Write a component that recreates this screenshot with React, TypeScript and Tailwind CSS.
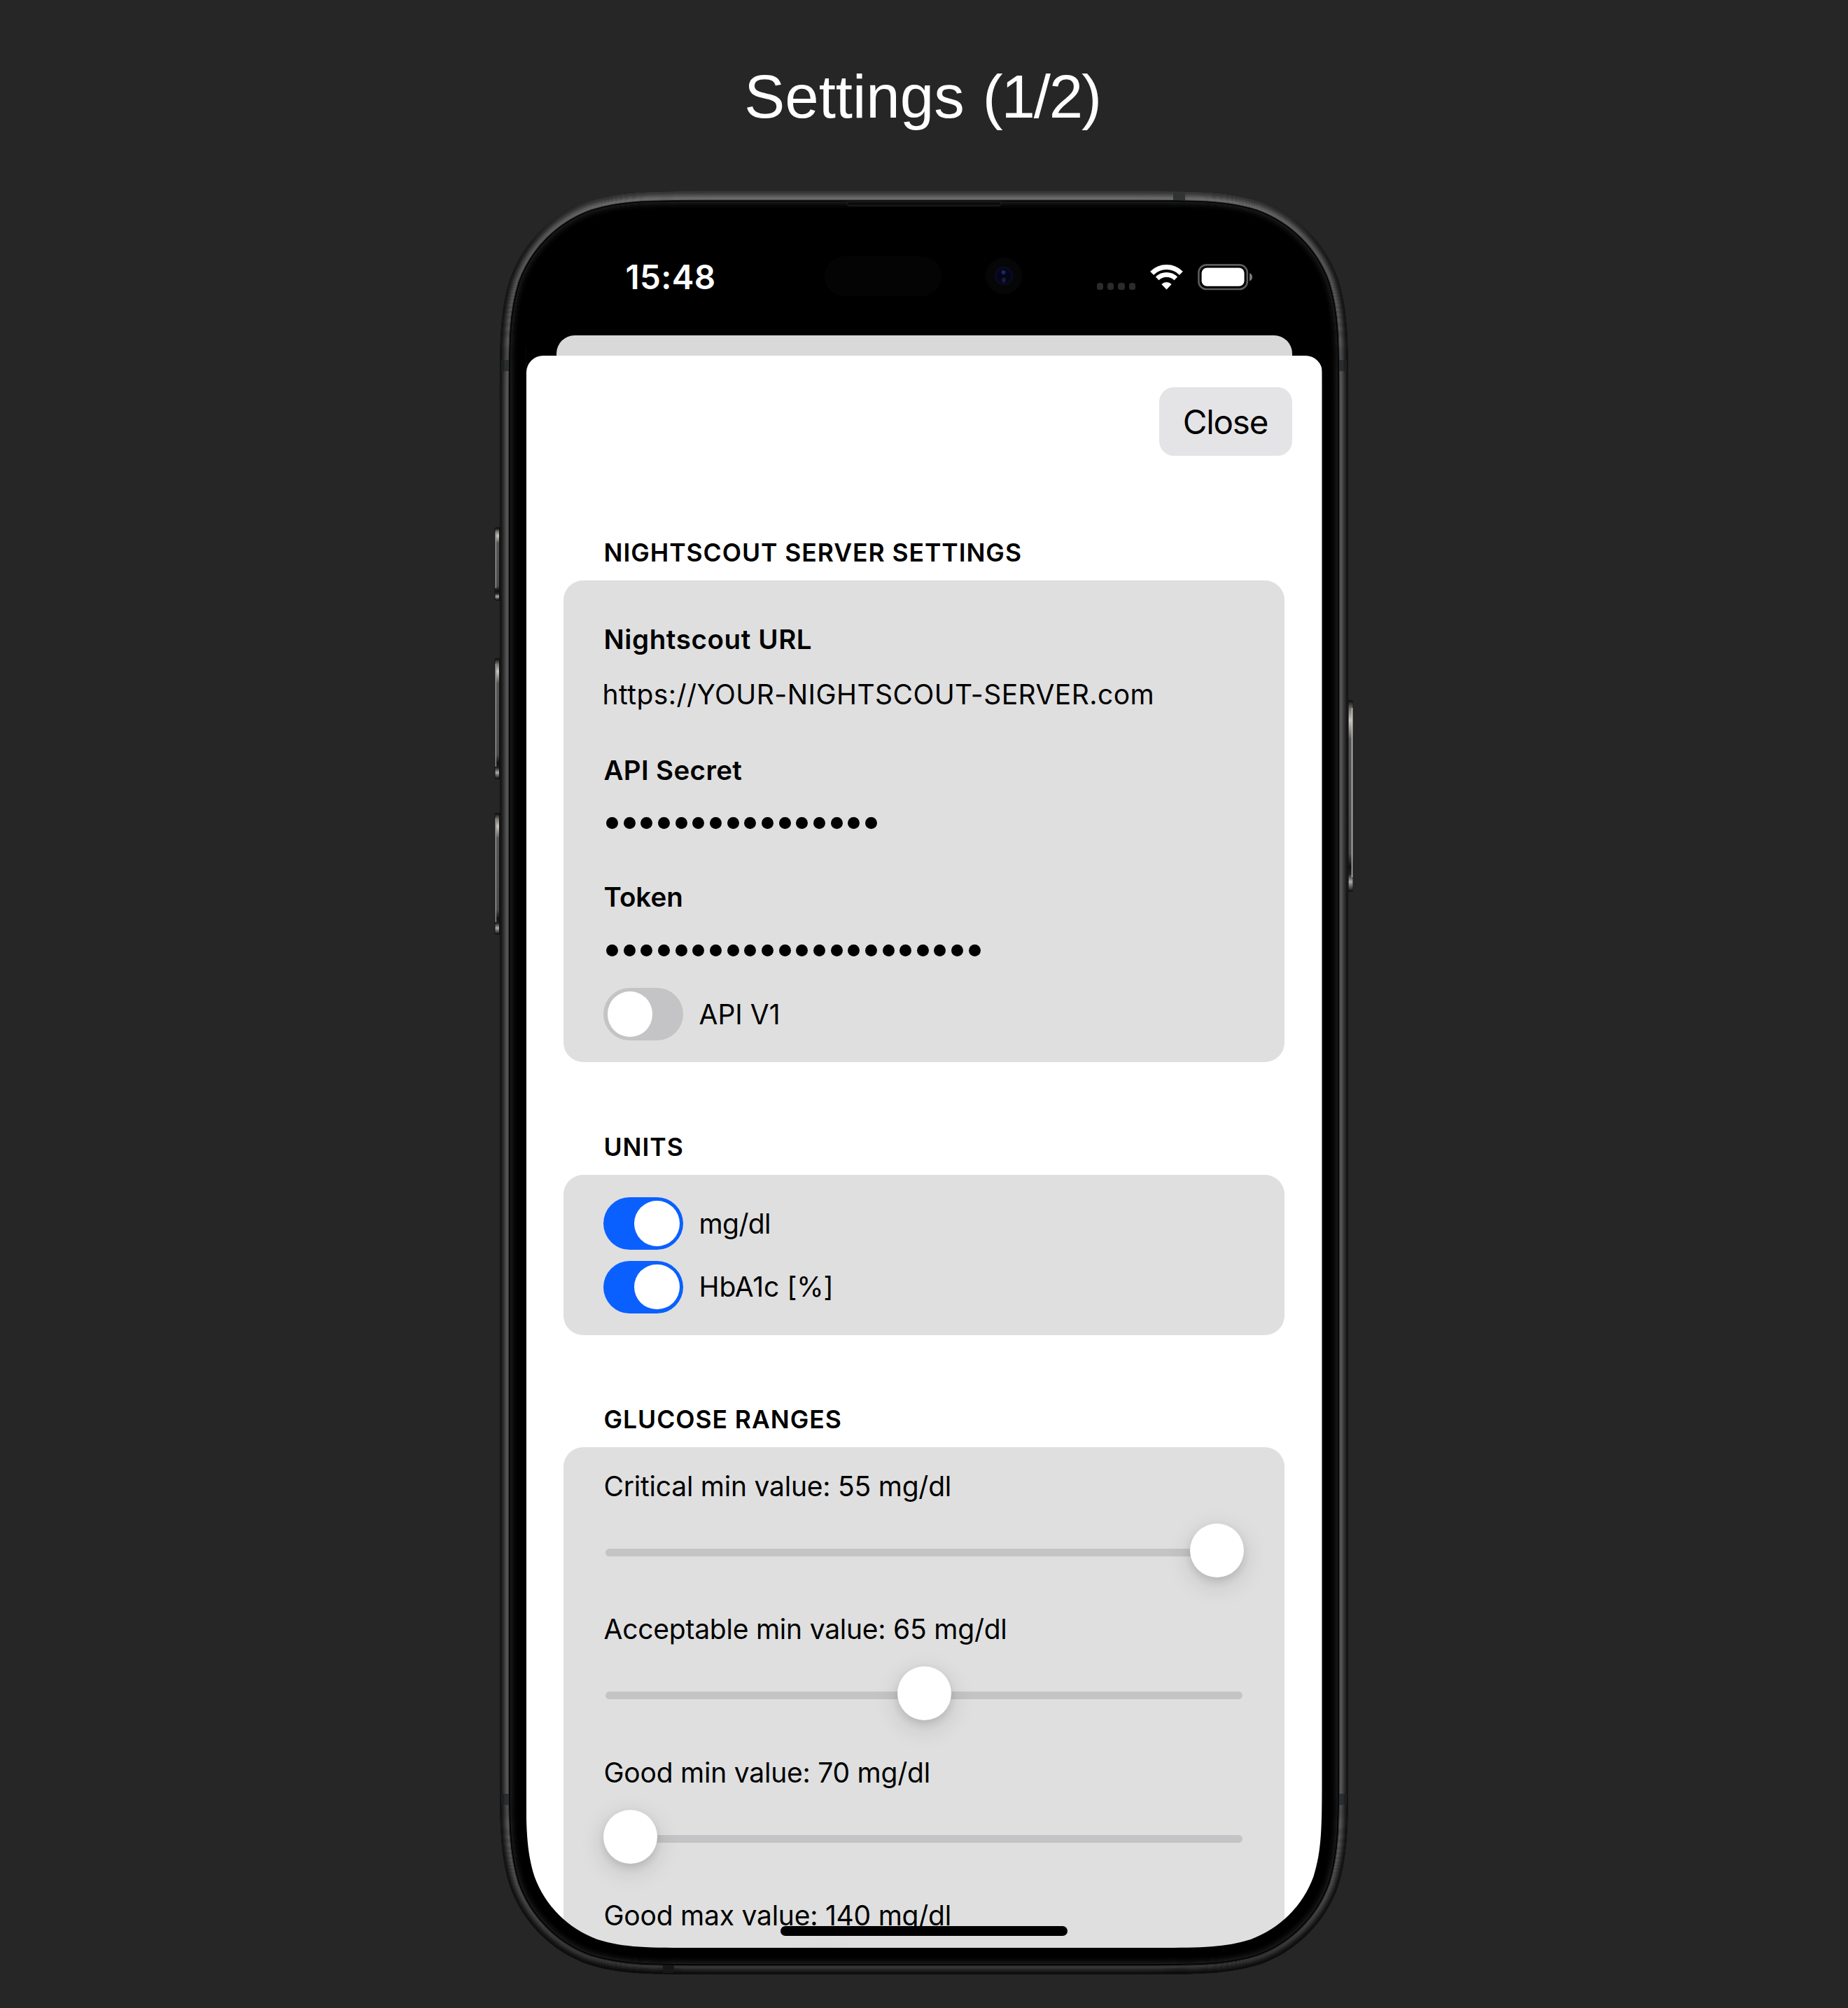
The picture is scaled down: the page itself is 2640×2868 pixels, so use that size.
import React from "react";

/* Rounded rectangle with continuous-curvature corners. */
function squircle(x: number, y: number, w: number, h: number, r: number): string {
  const A = 1.52866, B = 1.08849, C = 0.86841, D = 0.63149, E = 0.07491, F = 0.37282, G = 0.16906;
  const X = (u: number, right: boolean) => (right ? x + w - u * r : x + u * r).toFixed(2);
  const Y = (v: number, bottom: boolean) => (bottom ? y + h - v * r : y + v * r).toFixed(2);
  const P = (u: number, v: number, right: boolean, bottom: boolean) => `${X(u, right)} ${Y(v, bottom)}`;
  return [
    `M${P(A, 0, false, false)}L${P(A, 0, true, false)}`,
    `C${P(B, 0, true, false)} ${P(C, 0, true, false)} ${P(D, E, true, false)}`,
    `C${P(F, G, true, false)} ${P(G, F, true, false)} ${P(E, D, true, false)}`,
    `C${P(0, C, true, false)} ${P(0, B, true, false)} ${P(0, A, true, false)}`,
    `L${P(0, A, true, true)}`,
    `C${P(0, B, true, true)} ${P(0, C, true, true)} ${P(E, D, true, true)}`,
    `C${P(G, F, true, true)} ${P(F, G, true, true)} ${P(D, E, true, true)}`,
    `C${P(C, 0, true, true)} ${P(B, 0, true, true)} ${P(A, 0, true, true)}`,
    `L${P(A, 0, false, true)}`,
    `C${P(B, 0, false, true)} ${P(C, 0, false, true)} ${P(D, E, false, true)}`,
    `C${P(F, G, false, true)} ${P(G, F, false, true)} ${P(E, D, false, true)}`,
    `C${P(0, C, false, true)} ${P(0, B, false, true)} ${P(0, A, false, true)}`,
    `L${P(0, A, false, false)}`,
    `C${P(0, B, false, false)} ${P(0, C, false, false)} ${P(E, D, false, false)}`,
    `C${P(G, F, false, false)} ${P(F, G, false, false)} ${P(D, E, false, false)}`,
    `C${P(C, 0, false, false)} ${P(B, 0, false, false)} ${P(A, 0, false, false)}Z`,
  ].join("");
}

const W = 1212;
const H = 2547;
const ring = (inset: number) => squircle(inset, inset, W - 2 * inset, H - 2 * inset, 198 - inset);
const SCREEN = squircle(37.5, 37, 1137, 2472, 161);

/* Metal band: one closed outline per pixel step, dark at the edge and bright toward the glass. */
const BAND: [number, string][] = [
  [0.5, "#161616"], [1.5, "#161616"], [2.5, "#1a1a1a"], [3.5, "#202020"], [4.5, "#282828"],
  [5.5, "#303030"], [6.5, "#383838"], [7.5, "#404040"], [8.5, "#484848"], [9.5, "#505050"],
  [10.5, "#555555"], [11.5, "#585858"], [12.5, "#3c3c3c"], [13.5, "#0c0c0c"], [14.5, "#020202"],
  [15.5, "#1c1c1c"], [16.5, "#161616"], [17.5, "#121212"], [18.5, "#0f0f0f"], [19.5, "#0c0c0c"],
  [20.5, "#090909"], [21.5, "#070707"], [22.5, "#050505"], [23.5, "#030303"],
];

function PhoneFrame() {
  return (
    <svg className="pointer-events-none absolute -left-2 top-0" width={W + 16} height={H} viewBox={`-8 0 ${W + 16} ${H}`}>
      <defs>
        <linearGradient id="shade" x1="0" y1="0" x2="0" y2="1">
          <stop offset="0" stopColor="#fff" stopOpacity="0.14" />
          <stop offset="0.03" stopColor="#fff" stopOpacity="0.03" />
          <stop offset="0.1" stopColor="#000" stopOpacity="0" />
          <stop offset="0.93" stopColor="#000" stopOpacity="0" />
          <stop offset="1" stopColor="#000" stopOpacity="0.4" />
        </linearGradient>
        <linearGradient id="key" x1="0" y1="0" x2="0" y2="1">
          <stop offset="0" stopColor="#1a1a1a" />
          <stop offset="0.04" stopColor="#77736f" />
          <stop offset="0.1" stopColor="#c8c4bf" />
          <stop offset="0.2" stopColor="#555" />
          <stop offset="0.8" stopColor="#4a4a4a" />
          <stop offset="0.87" stopColor="#111" />
          <stop offset="0.91" stopColor="#222" />
          <stop offset="0.95" stopColor="#aaa" />
          <stop offset="1" stopColor="#111" />
        </linearGradient>
      </defs>
      {[[480, 105], [667, 173], [888, 174]].map(([y, h]) => (
        <g key={y}>
          <rect x="-7.5" y={y} width="9" height={h} rx="3" fill="#141414" />
          <rect x="-6.5" y={y + 2} width="6.5" height={h - 3} rx="2" fill="url(#key)" />
          <rect x="-6.5" y={y + 8} width="1.6" height={h - 26} fill="#8f8d8a" />
          <rect x="-1" y={y} width="1.5" height={h} fill="#0c0c0c" />
        </g>
      ))}
      <rect x="1211" y="727" width="8" height="274" rx="3" fill="#141414" />
      <rect x="1212.5" y="729" width="6" height="271" rx="2" fill="url(#key)" />
      <rect x="1216.8" y="738" width="1.5" height="242" fill="#c4c1bc" />

      <path fillRule="evenodd" fill="#000" d={ring(0) + SCREEN} />
      {BAND.map(([inset, color]) => (
        <path key={inset} d={ring(inset)} fill="none" stroke={color} strokeWidth="1.3" />
      ))}
      <path fillRule="evenodd" fill="url(#shade)" d={ring(0) + ring(13)} />

      <rect x="962" y="2" width="17" height="11" fill="#303234" />
      <rect x="233" y="2534" width="16" height="11" fill="#161717" />
      {[241, 2289].map((y) => (
        <g key={y}>
          <rect x="2" y={y} width="11" height="16" fill="#1e2021" />
          <rect x="6.5" y={y} width="6.5" height="16" fill="#2b2e30" />
          <rect x="1199" y={y} width="11" height="16" fill="#1e2021" />
          <rect x="1199" y={y} width="6.5" height="16" fill="#2b2e30" />
        </g>
      ))}
      <path d="M495 15 q1 6 4 6 h214 q3 0 4 -6 z" fill="#0c0c0c" stroke="#262626" strokeWidth="1" />
    </svg>
  );
}

function StatusBar() {
  return (
    <div className="h-[193px] w-full pt-[80px] text-white">
      <div className="flex h-[60px] items-center">
        <div className="ml-[142px] w-[284px] text-[47.5px] leading-[60px] font-semibold tracking-[0.4px]">15:48</div>
        <div className="-mt-[4px] h-[57px] w-[167px] rounded-full bg-[#040404]" />
        <svg className="-mt-[4px] ml-[63px]" width="52" height="52" viewBox="0 0 52 52">
          <circle cx="26" cy="26" r="26" fill="#070607" />
          <circle cx="26" cy="26" r="13.5" fill="#090a1c" />
          <circle cx="26" cy="26" r="10" fill="#04051a" />
          <circle cx="25.5" cy="21" r="3" fill="#20245c" />
          <circle cx="26" cy="31.5" r="3" fill="#0b2434" />
          <circle cx="26" cy="34" r="1.8" fill="#3a1048" />
        </svg>
        <div className="mt-[25px] ml-[107px] flex gap-[6px]">
          {[0, 1, 2, 3].map((i) => (
            <i key={i} className="h-[10px] w-[9.4px] rounded-[3.5px] bg-[#2b2b2b]" />
          ))}
        </div>
        <svg className="ml-[20px]" width="49" height="36" viewBox="0 0 49 36" fill="none">
          <path d="M3.6 12.2 A29.5 29.5 0 0 1 45.4 12.2" stroke="#fff" strokeWidth="7" />
          <path d="M11.2 19.9 A18.8 18.8 0 0 1 37.8 19.9" stroke="#fff" strokeWidth="6.6" />
          <path d="M24.5 35.5 L17.3 28 Q20.3 25 24.5 25 T31.7 28 Z" fill="#fff" />
        </svg>
        <svg className="ml-[20px]" width="80" height="38" viewBox="0 0 80 38">
          <rect x="1.4" y="1.4" width="69.4" height="34.6" rx="11" fill="none" stroke="#5c5c5c" strokeWidth="2.6" />
          <rect x="5.6" y="5.6" width="61" height="26.2" rx="7.5" fill="#fff" />
          <path d="M74 13 Q78 14.5 78 18.7 T74 24.4 Z" fill="#7a7a7a" />
        </svg>
      </div>
    </div>
  );
}

function SectionTitle({ children }: { children: React.ReactNode }) {
  return <h2 className="pl-[57.5px] text-[35.5px] leading-[44px] font-semibold tracking-[0.95px] text-black">{children}</h2>;
}

function Card({ className = "", children }: { className?: string; children: React.ReactNode }) {
  return <section className={`w-[1030px] rounded-[28px] bg-[#dfdfdf] pl-[57px] ${className}`}>{children}</section>;
}

function FieldLabel({ className = "", children }: { className?: string; children: React.ReactNode }) {
  return <div className={`pl-[0.5px] text-[38.5px] leading-[48px] font-semibold ${className}`}>{children}</div>;
}

function Secret({ count, className }: { count: number; className: string }) {
  return (
    <div className={`flex gap-[7.66px] pl-[4px] ${className}`}>
      {Array.from({ length: count }, (_, i) => (
        <i key={i} className="size-[17px] rounded-full bg-black" />
      ))}
    </div>
  );
}

function Toggle({ on = false, label, className = "", text = "tracking-normal" }: { on?: boolean; label: string; className?: string; text?: string }) {
  return (
    <div className={`flex h-[75px] items-center ${className}`}>
      <div className={`flex h-[75px] w-[114px] items-center rounded-full px-[5.5px] ${on ? "justify-end bg-[#0a60ff]" : "bg-[#c4c4c6]"}`}>
        <div className="size-[64.5px] rounded-full bg-white" />
      </div>
      <span className={`ml-[22.5px] text-[39px] leading-[48px] ${text}`}>{label}</span>
    </div>
  );
}

function Range({ label, offset }: { label: string; offset: string }) {
  return (
    <div className="h-[204.3px]">
      <div className="pl-[0.5px] text-[39px] leading-[48px] tracking-[-0.23px] whitespace-nowrap">{label}</div>
      <div className="mt-[28.5px] flex h-[78px] w-[914px] items-center">
        <div className="mt-[6px] ml-[3px] h-[11px] w-[910px] rounded-full bg-[#c4c4c6]" />
        <div className={`-ml-[913px] size-[77px] shrink-0 rounded-full bg-white shadow-[0_10px_36px_rgba(0,0,0,0.14),0_5px_12px_rgba(0,0,0,0.1)] ${offset}`} />
      </div>
    </div>
  );
}

export default function App() {
  return (
    <div className="flex h-[2868px] w-[2640px] flex-col items-center overflow-hidden bg-[#262626] font-['Inter',sans-serif] text-black">
      <h1 className="h-[273px] pt-[88px] pr-[5px] font-['Liberation_Sans',sans-serif] text-[87px] leading-[100px] text-white">
        Settings <span className="ml-[2px] tracking-[-2.2px]">(1/2)</span>
      </h1>
      <main className="relative h-[2547px] w-[1212px] pt-[13px] pr-[37.5px] pl-[37.5px]">
        <div className="h-[2496px] w-[1137px] overflow-hidden rounded-t-[185px] rounded-b-[155px] bg-black">
          <StatusBar />
          <div className="mx-auto h-[29px] w-[1051px] rounded-t-[26px] bg-[#d9d9d9]" />
          <div className="flex h-[2280px] w-full flex-col items-center rounded-t-[24px] bg-white">
            <div className="flex h-[241px] w-full shrink-0 justify-end pt-[45px] pr-[43px]">
              <button className="h-[98px] w-[190px] rounded-[21px] bg-[#e4e4e6] pt-[2px] text-[47.5px] tracking-[-1.2px]">Close</button>
            </div>
            <div className="w-[1030px]">
              <div className="h-[80px] pt-[19px]"><SectionTitle>NIGHTSCOUT SERVER SETTINGS</SectionTitle></div>
              <Card className="h-[688px] pt-[60px]">
                <FieldLabel className="tracking-[0.6px]">Nightscout URL</FieldLabel>
                <div className="mt-[31px] -ml-[1.5px] text-[39px] leading-[48px] tracking-[0.44px] whitespace-nowrap">https://YOUR-NIGHTSCOUT-SERVER.com</div>
                <FieldLabel className="mt-[59.5px] tracking-[0.35px]">API Secret</FieldLabel>
                <Secret count={16} className="mt-[43.5px]" />
                <FieldLabel className="mt-[73px]">Token</FieldLabel>
                <Secret count={22} className="mt-[44px]" />
                <Toggle label="API V1" className="mt-[45px]" />
              </Card>
              <div className="h-[161px] pt-[100px]"><SectionTitle>UNITS</SectionTitle></div>
              <Card className="h-[229px] pt-[32px]">
                <Toggle on label="mg/dl" text="tracking-[-0.6px]" />
                <Toggle on label="HbA1c [%]" className="mt-[15.5px]" text="tracking-[-0.1px]" />
              </Card>
              <div className="h-[160px] pt-[99px]"><SectionTitle>GLUCOSE RANGES</SectionTitle></div>
              <Card className="h-[760px] pt-[32px]">
                <Range label="Critical min value: 55 mg/dl" offset="translate-x-[838px]" />
                <Range label="Acceptable min value: 65 mg/dl" offset="translate-x-[420px]" />
                <Range label="Good min value: 70 mg/dl" offset="translate-x-0" />
                <Range label="Good max value: 140 mg/dl" offset="translate-x-[274px]" />
              </Card>
            </div>
          </div>
        </div>
        <div className="absolute top-[2478px] left-[401px] h-[14px] w-[410px] rounded-full bg-black" />
        <PhoneFrame />
      </main>
    </div>
  );
}
